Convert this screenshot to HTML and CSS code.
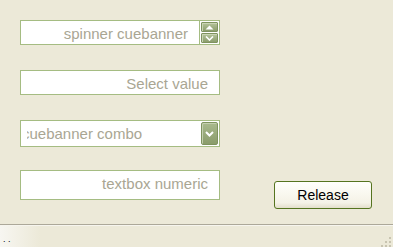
FILE: index.html
```html
<html lang="en">
<head>
    <meta charset="UTF-8">
    <meta name="viewport" content="width=device-width, initial-scale=1.0">
    <title>Cuebanner fields</title>
    <link rel="stylesheet" href="styles.css">
</head>
<body>
    <div class="main">
        <div class="field spinner">
            <div class="spinner-text">spinner cuebanner</div>
            <div class="spin-buttons">
                <div class="spin-btn">
                    <svg width="9" height="5" viewBox="0 0 9 5"><path d="M0.5 4.5 L4.5 0.5 L8.5 4.5 Z" fill="#fff"/></svg>
                </div>
                <div class="spin-btn">
                    <svg width="9" height="5" viewBox="0 0 9 5"><path d="M1 0.5 L4.5 4 L8 0.5" fill="none" stroke="#fff" stroke-width="1.6"/></svg>
                </div>
            </div>
        </div>
        <div class="field select">Select value</div>
        <div class="field combo">
            <div class="combo-text"><span>cuebanner combo</span></div>
            <div class="combo-btn">
                <svg width="9" height="6" viewBox="0 0 9 6"><path d="M1 1 L4.5 4.5 L8 1" fill="none" stroke="#fff" stroke-width="2"/></svg>
            </div>
        </div>
        <div class="last-row">
            <div class="field numeric">textbox numeric</div>
            <button class="release">Release</button>
        </div>
    </div>
    <div class="status">
        <span class="status-dots">. .</span>
        <svg class="grip" width="12" height="12" viewBox="0 0 12 12">
            <rect x="9" y="1" width="2" height="2" fill="#c8c4b0"/>
            <rect x="5" y="5" width="2" height="2" fill="#c8c4b0"/>
            <rect x="9" y="5" width="2" height="2" fill="#c8c4b0"/>
            <rect x="1" y="9" width="2" height="2" fill="#c8c4b0"/>
            <rect x="5" y="9" width="2" height="2" fill="#c8c4b0"/>
            <rect x="9" y="9" width="2" height="2" fill="#c8c4b0"/>
        </svg>
    </div>
</body>
</html>
```

FILE: styles.css
```css
body {
    margin: 0;
    padding: 0;
    width: 393px;
    height: 247px;
    overflow: hidden;
    background-color: #ece9d8;
    font-family: "Liberation Sans", Arial, sans-serif;
}
.main {
    height: 224px;
    padding: 20px 0 0 20px;
    box-sizing: border-box;
    display: flex;
    flex-direction: column;
    gap: 25px;
}
.field {
    width: 200px;
    box-sizing: border-box;
    border: 1px solid #a5bc82;
    background: #fff;
    color: #a9a693;
    font-size: 15px;
    line-height: 17px;
}
.spinner {
    height: 25px;
    display: flex;
}
.spinner-text {
    flex: 1;
    border-right: 1px solid #a5bc82;
    text-align: right;
    padding: 4px 11px 0 0;
}
.spin-buttons {
    width: 19px;
    display: flex;
    flex-direction: column;
    gap: 1px;
    padding: 1px 1px 1px 1px;
    box-sizing: border-box;
}
.spin-btn {
    flex: 1;
    border: 1px solid #7f935f;
    border-radius: 1px;
    background: linear-gradient(#b5c49b, #8b9d6c);
    box-shadow: inset 1px 1px 0 #c9d5b4;
    display: flex;
    align-items: center;
    justify-content: center;
}
.select {
    height: 25px;
    text-align: right;
    padding: 4px 11px 0 0;
}
.combo {
    height: 27px;
    display: flex;
    padding: 1px 1px 1px 0;
}
.combo-text {
    flex: 1;
    overflow: hidden;
    margin-left: 6px;
    padding-top: 3px;
    white-space: nowrap;
}
.combo-text span {
    margin-left: -5px;
}
.combo-btn {
    width: 15px;
    margin-right: 0;
    border: 1px solid #7f935f;
    border-radius: 2px;
    background: linear-gradient(#a9b98d, #8a9c6b);
    box-shadow: inset 1px 1px 0 #c3cfae;
    display: flex;
    align-items: center;
    justify-content: center;
}
.last-row {
    display: flex;
    margin-top: -2px;
}
.numeric {
    height: 30px;
    text-align: right;
    padding: 4px 11px 0 0;
}
.release {
    margin: 11px 0 0 54px;
    width: 98px;
    height: 28px;
    border: 1px solid #55741f;
    border-radius: 3px;
    background: linear-gradient(#fffffb, #f4f2e6 80%, #e3dfcb);
    font-family: "Liberation Sans", Arial, sans-serif;
    font-size: 14px;
    color: #000;
    padding: 0;
}
.status {
    height: 23px;
    border-top: 1px solid #aca899;
    box-shadow: inset 0 1px 0 #f6f5ee;
    background: linear-gradient(90deg, #f7f6f1, #ece9d8 40px);
    display: flex;
    align-items: flex-end;
    justify-content: space-between;
    position: relative;
}
.status-dots {
    font-size: 9px;
    line-height: 9px;
    color: #000;
    margin: 0 0 4px 3px;
    letter-spacing: 0;
}
.grip {
    margin: 0 1px 0 0;
}
```
